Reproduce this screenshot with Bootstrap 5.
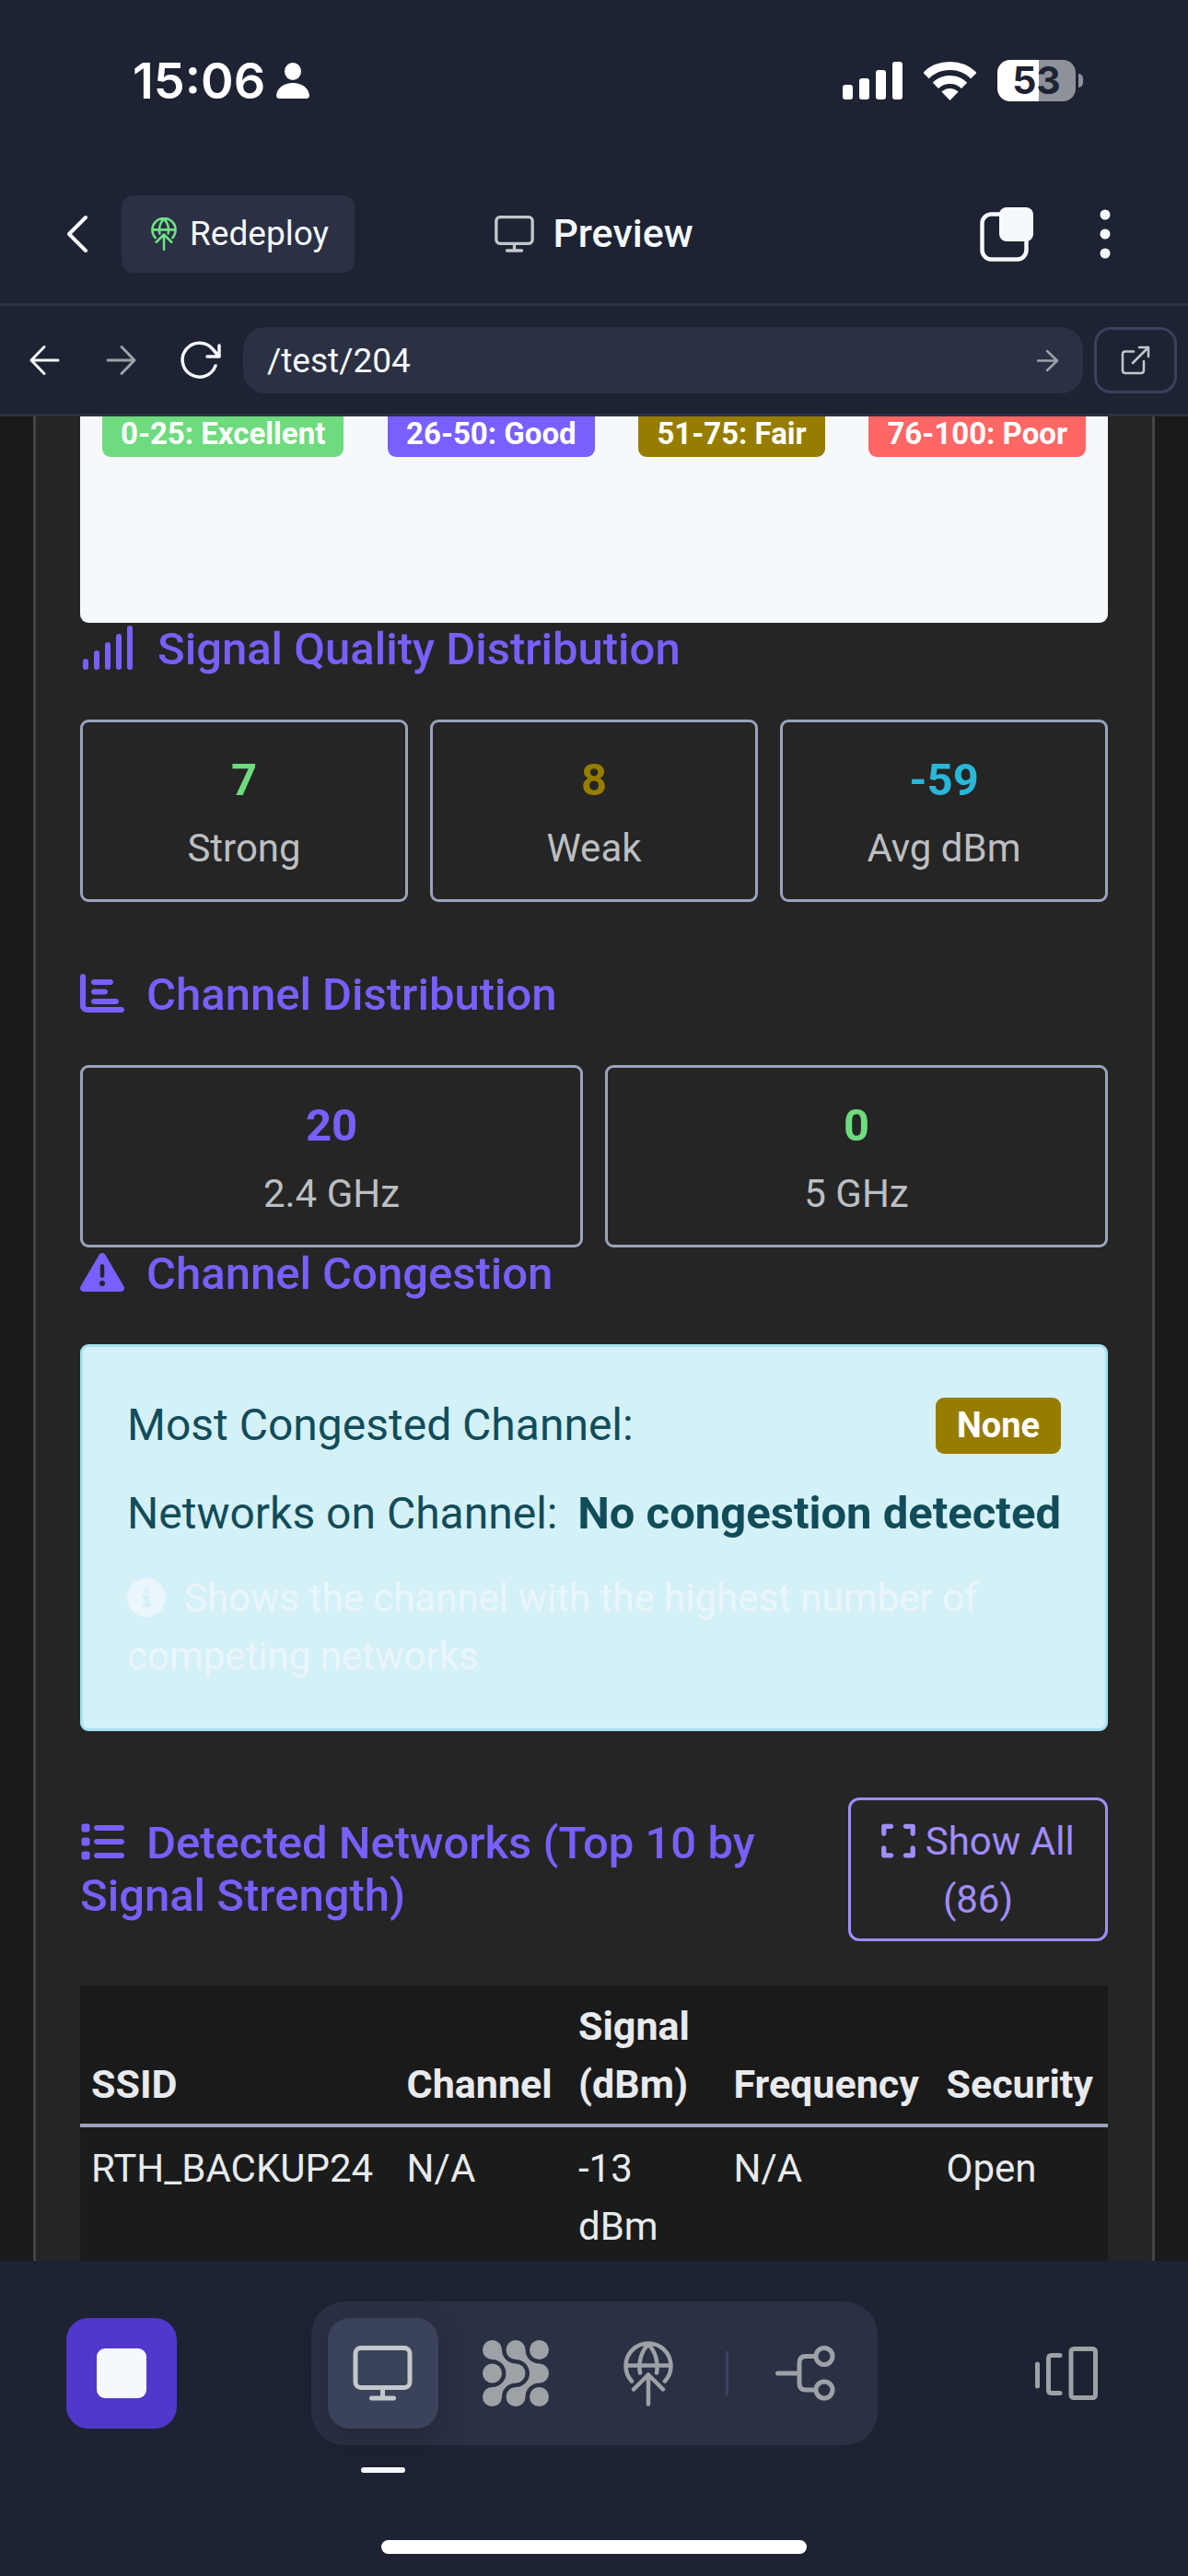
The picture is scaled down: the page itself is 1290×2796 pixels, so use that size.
<!DOCTYPE html>
<html lang="en">
<head>
<meta charset="utf-8">
<meta name="viewport" content="width=device-width, initial-scale=1">
<title>Preview</title>
<link rel="stylesheet" href="https://cdn.jsdelivr.net/npm/bootstrap@5.3.0/dist/css/bootstrap.min.css">
<style>
:root{--shell:#1d2333;--panel:#2b3044;--raised:#3b435a;--ink:#f5f9fc;--dim:#9da2a6;--line:#9aa3bc;--violet:#7a5fff;--green:#6edb7f;--olive:#967d00;--red:#ff6666;--cyan:#29b6d8}
body{height:100vh;background:var(--shell);color:var(--ink);font-family:Roboto,"Noto Sans",sans-serif;font-size:42px;line-height:63px;overflow:hidden}
svg{display:block;flex:none;fill:none;stroke:currentColor;stroke-linecap:round;stroke-linejoin:round}
svg.solid{fill:currentColor;stroke:none}
.statusbar{padding:55px 114px 57px 144px;height:178px;color:#fff;font-family:Inter,sans-serif}
.clock{font-size:54px;font-weight:600;line-height:64px}
.battery{width:85px;height:45px;border-radius:14px;background:linear-gradient(90deg,#fff 53%,#8e9199 53%);color:var(--shell);font-size:41px;font-weight:700;line-height:45px}
.nub{width:5px;height:15px;border-radius:0 5px 5px 0;background:#8e9199;margin-left:3px}
.topbar{height:155px;padding:0 54px;border-bottom:3px solid var(--panel)}
.side{flex:1 1 0}
.plain{border:0;background:none;color:inherit;padding:0;display:flex;align-items:center;justify-content:center;white-space:nowrap}
.back{width:60px;height:84px}
.redeploy{height:84px;margin-left:18px;padding:0 28px 0 32px;gap:14px;border-radius:12px;background:var(--panel);font-size:37px}
.apptitle{font-size:43px;font-weight:500;line-height:63px;gap:20px}
.copybtn{margin-right:52px}
.navrow{padding:23px 12px 22px 6px;border-bottom:3px solid var(--panel)}
.navbtn{width:84px;height:72px}
.urlbox{height:72px;margin:0 12px 0 6px;border-radius:24px;background:var(--panel);padding:0 26px}
.urlbox input{border:0;background:none;color:var(--ink);font-size:37px;padding:0;outline:0;min-width:0}
.openbtn{width:90px;height:72px;border:3px solid #3a415b;border-radius:18px;color:#c3c8cb}
.page{min-height:0;overflow:hidden;background:#1a1a1a;padding:0 36px}
.report{border:solid #444;border-width:0 3px;background:#252525;padding:0 48px}
.legend-box{height:224px;padding:0 24px;background:#f5f9fc;border-radius:0 0 9px 9px}
.pill-tag{font-size:33px;font-weight:700;line-height:38px;padding:0 20px 6px;border-radius:0 0 9px 9px;color:#fff}
h2{font-size:49px;font-weight:500;line-height:57px;color:var(--violet);margin:0}
h2 svg{display:inline-block;vertical-align:-6px;margin-right:24px}
.stat{border:3px solid var(--line);border-radius:9px;padding:34px 24px 24px;text-align:center}
.stat b{display:block;font-size:49px;line-height:57px;margin-bottom:14px}
.stat span{display:block;color:#bcbfc2}
.stats{gap:24px;margin:48px 0 72px}
.stats>div{flex:1 1 0}
.notice{margin:48px 0 72px;border:3px solid #a5e2ef;border-radius:9px;background:#d4f1f8;color:#114c59;padding:49px 48px 47px;font-size:48px;line-height:72px}
.notice strong{font-size:49px}
.notice .tag{background:var(--olive);color:#fff;font-size:38px;font-weight:700;line-height:37px;padding:12px 23px;border-radius:9px}
.hint{font-size:42px;line-height:63px;color:#eaf6fb}
.hint svg{display:inline-block;vertical-align:-6px;margin-right:20px}
.show-all{width:282px;border:3px solid #a08dff;border-radius:12px;background:none;color:#a08dff;padding:13px 24px 11px;flex:none}
.show-all svg{display:inline-block;vertical-align:-6px}
.nets{margin:48px 0 0;width:100%;table-layout:fixed;background:#1a1b1b;color:#e8eaed}
.nets th,.nets td{padding:13px 12px 11px;vertical-align:top}
.nets th{vertical-align:bottom;background:#1a1a1a;font-size:43px}
.nets thead{border-bottom:4px solid var(--line)}
.dock{padding:44px 72px 24px}
.tabs{padding:18px;gap:24px;border-radius:36px;background:var(--panel);color:var(--dim)}
.key{width:120px;height:120px;border-radius:24px;color:var(--dim)}
.key.on{position:relative;background:var(--raised);color:#c3c8cb;box-shadow:0 12px 30px rgba(20,22,36,.35)}
.key.on::after{content:"";position:absolute;left:36px;bottom:-48px;width:48px;height:6px;border-radius:3px;background:var(--ink)}
.key.stop{background:#5138cb}
.key.stop i{width:54px;height:54px;border-radius:9px;background:var(--ink)}
.rule{width:3px;height:48px;background:#3b435f}
.homebar{width:462px;height:15px;border-radius:8px;background:#fff;margin:103px auto 0}
</style>
<script src="https://cdn.jsdelivr.net/npm/bootstrap@5.3.0/dist/js/bootstrap.bundle.min.js"></script>
</head>
<body class="d-flex flex-column">
<div class="statusbar d-flex justify-content-between align-items-center">
  <div class="d-flex align-items-center">
    <span class="clock">15:06</span>
    <svg class="solid" style="margin-left:12px" width="36" height="39" viewBox="0 0 36 39"><ellipse cx="18" cy="9.500" rx="9" ry="9.500"/><path d="M4 39Q0 39 0 35.500C1 27 9 22 18 22S35 27 36 35.500Q36 39 32 39Z"/></svg>
  </div>
  <div class="d-flex align-items-center">
    <svg class="solid" width="65" height="41" viewBox="0 0 65 41"><rect y="25" width="11" height="16" rx="3"/><rect x="18" y="18" width="11" height="23" rx="3"/><rect x="36" y="9" width="11" height="32" rx="3"/><rect x="54" width="11" height="41" rx="3"/></svg>
    <svg width="57" height="42" viewBox="0 0 57 42" style="margin:0 23px"><clipPath id="fan"><path d="M28.500 42L-13 -1V-9H70V-1Z"/></clipPath><g clip-path="url(#fan)" stroke-width="9"><circle cx="28.500" cy="42" r="37.500"/><circle cx="28.500" cy="42" r="22.500"/><circle cx="28.500" cy="42" r="13" fill="currentColor" stroke="none"/></g></svg>
    <div class="battery text-center">53</div><div class="nub"></div>
  </div>
</div>

<header class="topbar d-flex align-items-center">
  <div class="side d-flex align-items-center">
    <button class="plain back" type="button" aria-label="Back"><svg width="24" height="42" viewBox="0 0 24 42" stroke-width="4"><path d="M21 3L3 21L21 39"/></svg></button>
    <button class="plain redeploy" type="button"><svg style="color:#6fe083" width="28" height="36" viewBox="0 0 54 70" stroke-width="5"><path d="M9 43A24.500 24.500 0 1 1 45 43M3 26H51M27 3C19 11 16 23 18 34M27 3C35 11 38 23 36 34M27 36V68M11 52L27 36L43 52"/></svg>Redeploy</button>
  </div>
  <div class="apptitle d-flex align-items-center"><svg style="color:#c3c8cb" width="43" height="40" viewBox="0 0 64 60" stroke-width="5"><rect x="2.500" y="2.500" width="59" height="43" rx="6"/><path d="M32 46V57M20 57H44"/></svg>Preview</div>
  <div class="side d-flex align-items-center justify-content-end">
    <button class="plain copybtn" type="button" aria-label="Copy"><svg width="60" height="60" viewBox="0 0 60 60"><rect x="2.500" y="8.500" width="48" height="49" rx="10" stroke-width="4.500"/><rect x="21" y="1" width="37" height="37" rx="8" fill="currentColor" stroke="none"/></svg></button>
    <button class="plain" type="button" aria-label="More"><svg class="solid" width="60" height="60" viewBox="0 0 60 60"><circle cx="24" cy="9" r="5.500"/><circle cx="24" cy="30" r="5.500"/><circle cx="24" cy="51" r="5.500"/></svg></button>
  </div>
</header>

<nav class="navrow d-flex align-items-center">
  <button class="plain navbtn" type="button" aria-label="Previous page"><svg width="34" height="34" viewBox="0 0 34 34" stroke-width="3"><path d="M32 17H3M17 2.500L3 17L17 31.500"/></svg></button>
  <button class="plain navbtn" style="color:#9da2a6" type="button" aria-label="Next page"><svg width="34" height="34" viewBox="0 0 34 34" stroke-width="3"><path d="M2 17H31M17 2.500L31 17L17 31.500"/></svg></button>
  <button class="plain navbtn" type="button" aria-label="Reload"><svg width="48" height="42" viewBox="-4 0 48 42" stroke-width="3.500"><path d="M38 27A18.500 18.500 0 1 1 35 9L42 17M42 5V17H29"/></svg></button>
  <form class="urlbox d-flex align-items-center flex-grow-1">
    <label class="visually-hidden" for="url">Path</label>
    <input id="url" class="flex-grow-1" type="text" value="/test/204">
    <button class="plain" style="color:#9da2a6" type="button" aria-label="Go"><svg width="25" height="25" viewBox="0 0 25 25" stroke-width="2.500"><path d="M2 12.500H23M12 2L23 12.500L12 23"/></svg></button>
  </form>
  <button class="plain openbtn" type="button" aria-label="Open in new tab"><svg width="32" height="32" viewBox="0 0 32 32" stroke-width="2.500"><path d="M14 6.500H5Q2 6.500 2 9.500V27Q2 30 5 30H22Q25 30 25 27V17M13 19L30 2M20 2H30V12"/></svg></button>
</nav>

<main class="page flex-grow-1">
  <div class="report">
    <div class="legend-box d-flex justify-content-between align-items-start">
      <span class="pill-tag" style="background:var(--green)">0-25: Excellent</span>
      <span class="pill-tag" style="background:var(--violet)">26-50: Good</span>
      <span class="pill-tag" style="background:var(--olive)">51-75: Fair</span>
      <span class="pill-tag" style="background:var(--red)">76-100: Poor</span>
    </div>

    <h2><svg class="solid" width="60" height="48" viewBox="0 0 60 48"><rect x="3" y="36" width="6" height="12" rx="3"/><rect x="15" y="27" width="6" height="21" rx="3"/><rect x="27" y="18" width="6" height="30" rx="3"/><rect x="39" y="9" width="6" height="39" rx="3"/><rect x="51" width="6" height="48" rx="3"/></svg>Signal Quality Distribution</h2>
    <div class="stats d-flex">
      <div class="stat"><b style="color:var(--green)">7</b><span>Strong</span></div>
      <div class="stat"><b style="color:var(--olive)">8</b><span>Weak</span></div>
      <div class="stat"><b style="color:var(--cyan)">-59</b><span>Avg dBm</span></div>
    </div>

    <h2><svg class="solid" width="48" height="48" viewBox="0 0 512 512"><path d="M32 32c17.700 0 32 14.300 32 32V400c0 8.800 7.200 16 16 16H480c17.700 0 32 14.300 32 32s-14.300 32-32 32H80c-44.200 0-80-35.800-80-80V64C0 46.300 14.300 32 32 32zm96 96c0-17.700 14.300-32 32-32l192 0c17.700 0 32 14.300 32 32s-14.300 32-32 32l-192 0c-17.700 0-32-14.300-32-32zm32 80H288c17.700 0 32 14.300 32 32s-14.300 32-32 32H160c-17.700 0-32-14.300-32-32s14.300-32 32-32zm0 112H416c17.700 0 32 14.300 32 32s-14.300 32-32 32H160c-17.700 0-32-14.300-32-32s14.300-32 32-32z"/></svg>Channel Distribution</h2>
    <div class="stats d-flex mb-0">
      <div class="stat"><b style="color:var(--violet)">20</b><span>2.4 GHz</span></div>
      <div class="stat"><b style="color:var(--green)">0</b><span>5 GHz</span></div>
    </div>

    <h2><svg class="solid" width="48" height="48" viewBox="0 0 512 512"><path d="M256 32c14.200 0 27.300 7.500 34.500 19.800l216 368c7.300 12.400 7.300 27.700 .2 40.100S486.300 480 472 480H40c-14.300 0-27.600-7.700-34.700-20.100s-7-27.800 .2-40.100l216-368C228.700 39.500 241.800 32 256 32zm0 128c-13.300 0-24 10.700-24 24V296c0 13.300 10.700 24 24 24s24-10.700 24-24V184c0-13.300-10.700-24-24-24zm32 224a32 32 0 1 0 -64 0 32 32 0 1 0 64 0z"/></svg>Channel Congestion</h2>
    <div class="notice">
      <div class="d-flex justify-content-between align-items-center">Most Congested Channel: <span class="tag">None</span></div>
      <div class="d-flex justify-content-between my-4"><span>Networks on Channel:</span><strong>No congestion detected</strong></div>
      <div class="hint"><svg class="solid" width="42" height="42" viewBox="0 0 512 512"><path d="M256 512A256 256 0 1 0 256 0a256 256 0 1 0 0 512zM216 336h24V272H216c-13.300 0-24-10.700-24-24s10.700-24 24-24h48c13.300 0 24 10.700 24 24v88h8c13.300 0 24 10.700 24 24s-10.700 24-24 24H216c-13.300 0-24-10.700-24-24s10.700-24 24-24zm40-208a32 32 0 1 1 0 64 32 32 0 1 1 0-64z"/></svg>Shows the channel with the highest number of competing networks</div>
    </div>

    <div class="d-flex justify-content-between align-items-center">
      <h2><svg class="solid" width="48" height="48" viewBox="0 0 512 512"><path d="M40 48C26.700 48 16 58.700 16 72v48c0 13.300 10.700 24 24 24H88c13.300 0 24-10.700 24-24V72c0-13.300-10.700-24-24-24H40zM192 64c-17.700 0-32 14.300-32 32s14.300 32 32 32H480c17.700 0 32-14.300 32-32s-14.300-32-32-32H192zm0 160c-17.700 0-32 14.300-32 32s14.300 32 32 32H480c17.700 0 32-14.300 32-32s-14.300-32-32-32H192zm0 160c-17.700 0-32 14.300-32 32s14.300 32 32 32H480c17.700 0 32-14.300 32-32s-14.300-32-32-32H192zM16 232v48c0 13.300 10.700 24 24 24H88c13.300 0 24-10.700 24-24V232c0-13.300-10.700-24-24-24H40c-13.300 0-24 10.700-24 24zM40 368c-13.300 0-24 10.700-24 24v48c0 13.300 10.700 24 24 24H88c13.300 0 24-10.700 24-24V392c0-13.300-10.700-24-24-24H40z"/></svg>Detected Networks (Top 10 by Signal Strength)</h2>
      <button class="show-all" type="button"><svg class="solid" width="37" height="42" viewBox="0 0 448 512"><path d="M32 32C14.300 32 0 46.300 0 64v96c0 17.700 14.300 32 32 32s32-14.300 32-32V96h64c17.700 0 32-14.300 32-32s-14.300-32-32-32H32zM64 352c0-17.700-14.300-32-32-32s-32 14.300-32 32v96c0 17.700 14.300 32 32 32h96c17.700 0 32-14.300 32-32s-14.300-32-32-32H64V352zM320 32c-17.700 0-32 14.300-32 32s14.300 32 32 32h64v64c0 17.700 14.300 32 32 32s32-14.300 32-32V64c0-17.700-14.300-32-32-32H320zM448 352c0-17.700-14.300-32-32-32s-32 14.300-32 32v64H320c-17.700 0-32 14.300-32 32s14.300 32 32 32h96c17.700 0 32-14.300 32-32V352z"/></svg> Show All (86)</button>
    </div>

    <table class="nets">
      <colgroup><col style="width:30.700%"><col style="width:16.700%"><col style="width:15.100%"><col style="width:20.700%"><col style="width:16.800%"></colgroup>
      <thead><tr><th>SSID</th><th>Channel</th><th>Signal (dBm)</th><th>Frequency</th><th>Security</th></tr></thead>
      <tbody><tr><td>RTH_BACKUP24</td><td>N/A</td><td>-13<br>dBm</td><td>N/A</td><td>Open</td></tr></tbody>
    </table>
  </div>
</main>

<footer class="dock">
  <div class="d-flex justify-content-between align-items-center">
    <button class="plain key stop" type="button" aria-label="Stop"><i></i></button>
    <div class="tabs d-flex align-items-center">
      <button class="plain key on" type="button" aria-label="Preview"><svg width="65" height="60" viewBox="0 0 64 60" stroke-width="5"><rect x="2.500" y="2.500" width="59" height="43" rx="6"/><path d="M32 46V57M20 57H44"/></svg></button>
      <button class="plain key" type="button" aria-label="Agent"><svg class="solid" width="72" height="72" viewBox="0 0 72 72"><circle cx="10.500" cy="10.500" r="10.500"/><circle cx="36" cy="10.500" r="10.500"/><circle cx="61.500" cy="10.500" r="10.500"/><circle cx="10.500" cy="36" r="10.500"/><circle cx="36" cy="36" r="10.500"/><circle cx="61.500" cy="36" r="10.500"/><circle cx="10.500" cy="61.500" r="10.500"/><circle cx="36" cy="61.500" r="10.500"/><circle cx="61.500" cy="61.500" r="10.500"/><path id="neck" d="M21 10.500C21 19 28 25.500 36 25.500V36H25.500C25.500 28 19 21 10.500 21V10.500Z"/><use href="#neck" x="25.500"/><g transform="matrix(1 0 0 -1 0 72)"><use href="#neck"/><use href="#neck" x="25.500"/></g></svg></button>
      <button class="plain key" type="button" aria-label="Deploy"><svg width="54" height="71" viewBox="0 0 54 70" stroke-width="4.500"><path d="M9 43A24.500 24.500 0 1 1 45 43M3 26H51M27 3C19 11 16 23 18 34M27 3C35 11 38 23 36 34M27 36V68M11 52L27 36L43 52"/></svg></button>
      <span class="rule"></span>
      <button class="plain key" type="button" aria-label="Version control"><svg width="65" height="60" viewBox="0 0 65 60" stroke-width="5"><path d="M2.500 30H26M43 11.500H33Q26 11.500 26 18.500V41Q26 48 33 48H43"/><circle cx="53" cy="11.500" r="9"/><circle cx="53" cy="48" r="9"/></svg></button>
    </div>
    <button class="plain key" type="button" aria-label="Switch tab"><svg width="68" height="58" viewBox="0 0 68 58" stroke-width="5"><path d="M2.500 19V43M27 9.500H18Q14.500 9.500 14.500 13V47Q14.500 50.500 18 50.500H27"/><rect x="39" y="2.500" width="26.500" height="53" rx="3"/></svg></button>
  </div>
  <div class="homebar"></div>
</footer>
</body>
</html>
